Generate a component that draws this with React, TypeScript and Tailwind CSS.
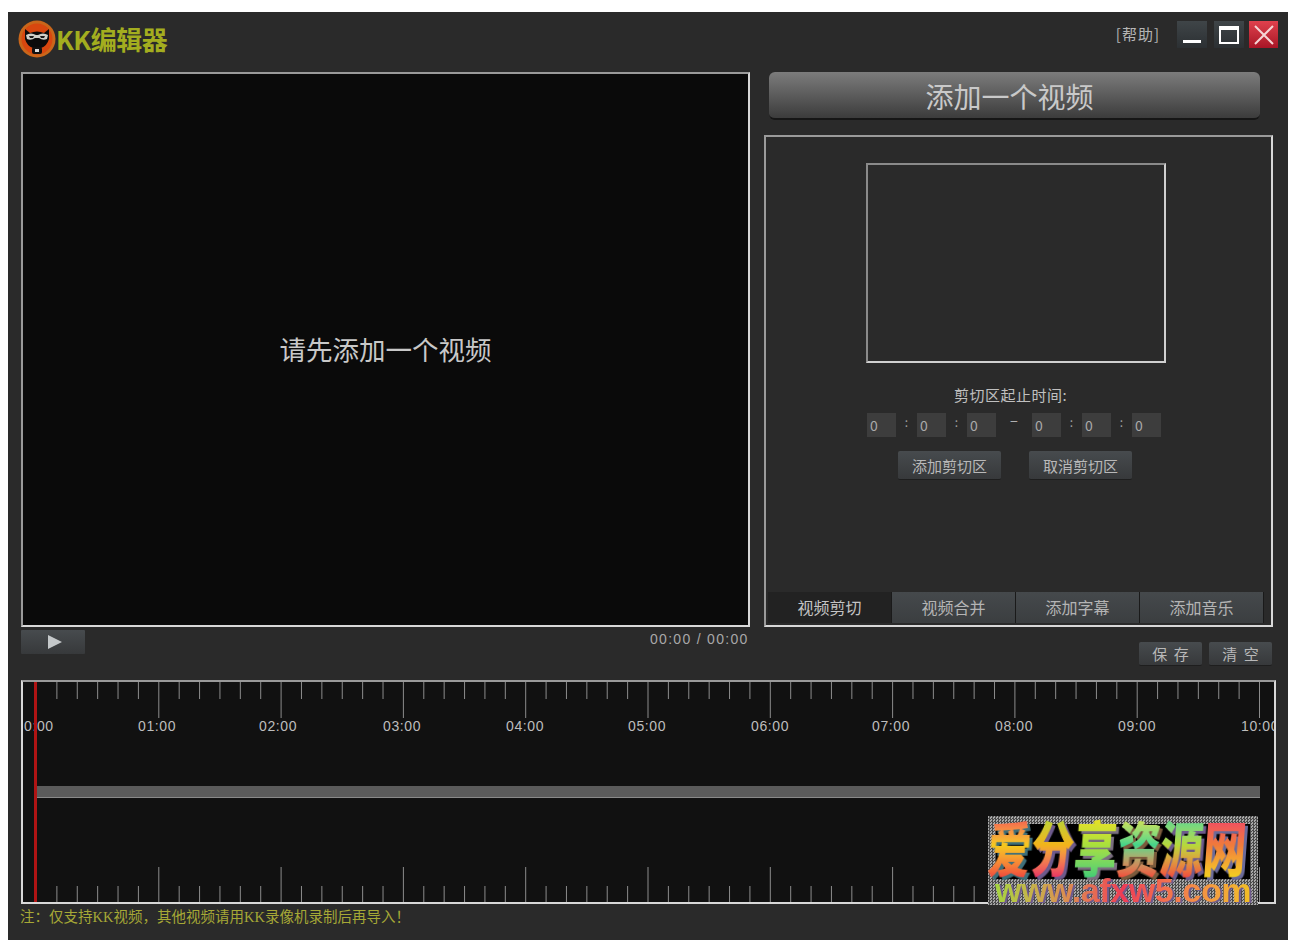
import React from 'react';

const minutes = ['0:00', '01:00', '02:00', '03:00', '04:00', '05:00', '06:00', '07:00', '08:00', '09:00', '10:00'];
const labelX = [1, 115, 236, 360, 483, 605, 728, 849, 972, 1095, 1218];

const ticks = Array.from({ length: 61 }, (_, i) => i).map((i) => ({
  x: 13.5 + (i * 1223) / 60,
  major: i % 6 === 0,
  first: i === 0
}));

const Logo = () => (
  <svg width="38" height="38" viewBox="0 0 38 38" className="shrink-0">
    <circle cx="19" cy="19" r="18.5" fill="#c9661a" />
    <circle cx="19" cy="19" r="15.5" fill="#d8470f" />
    <path d="M7 9 L12 13 Q19 10 26 13 L31 9 L31 19 Q29 26 23 28 L15 28 Q9 26 7 19 Z" fill="#0b0b0b" />
    <path d="M8 15 Q13 12 18 15 L20 15 Q25 12 30 15 L29 19 Q25 21 21 18 L17 18 Q13 21 9 19 Z" fill="#cfcfc8" />
    <path d="M11 16 L16 16 L15 18 L12 18 Z M22 16 L27 16 L26 18 L23 18 Z" fill="#1a1a1a" />
    <rect x="14" y="27" width="10" height="7" rx="2" fill="#111" />
    <rect x="17" y="29" width="4" height="3" fill="#ddd" />
  </svg>
);

const WinButton = ({ children, red }: { children: React.ReactNode; red?: boolean }) => (
  <div
    className={`h-[27px] flex items-center justify-center ${
      red ? 'w-[29px] bg-gradient-to-b from-[#e0414d] to-[#a81426]' : 'w-[30px] bg-gradient-to-b from-[#3f4548] to-[#2c3033]'
    }`}
  >
    {children}
  </div>
);

const SmallButton = ({ label, width }: { label: string; width: string }) => (
  <div
    className={`${width} h-full flex items-center justify-center whitespace-pre rounded-[2px] bg-gradient-to-b from-[#474b4e] to-[#37393b] border-b border-[#1e1e1e] text-[#b9b9b9] text-[15px] leading-none`}
  >
    {label}
  </div>
);

const TimeBox = () => (
  <div className="w-[29px] h-[24px] bg-[#3d3d3d] text-[#aaaaaa] text-[14px] leading-[24px] pl-[3px]">0</div>
);

const Colon = () => <div className="w-[21px] text-center text-[#a0a0a0] text-[12px] leading-[18px]">:</div>;

const Timeline = () => (
  <svg width="1251" height="220" viewBox="0 0 1251 220" className="block">
    {ticks.map((t) =>
      t.first ? null : (
        <g key={t.x} stroke="#8c8c8c" strokeWidth="1">
          <line x1={t.x} x2={t.x} y1="0" y2={t.major ? 36 : 17} />
          <line x1={t.x} x2={t.x} y1={t.major ? 185 : 204} y2="221" />
        </g>
      )
    )}
    {minutes.map((m, i) => (
      <text key={m} x={labelX[i]} y="49" fill="#bdbdbd" fontSize="14" letterSpacing="0.6" fontFamily="Liberation Sans, sans-serif">
        {m}
      </text>
    ))}
    <rect x="13" y="104" width="1224" height="12" fill="#5b5b5b" />
    <rect x="13" y="115" width="1224" height="1" fill="#8a8a8a" />
    <rect x="11" y="0" width="3" height="220" fill="#b01414" />
  </svg>
);

const Watermark = () => (
  <div className="absolute left-[980px] top-[804px] w-[270px] h-[89px] overflow-hidden bg-[repeating-conic-gradient(#4a4a4a_0_25%,#a8a8a8_0_50%)] bg-[length:3px_3px] font-['Noto_Sans_CJK_SC',sans-serif]">
    <div className="absolute left-[8px] right-[8px] top-[8px] bottom-[26px] bg-black" />
    <div className="absolute left-0 top-[-3px] flex pl-[3px] text-[43px] leading-[46px] font-black skew-x-[-6deg] scale-y-[1.4] origin-top">
      <span className="bg-gradient-to-b from-[#ef3b52] via-[#f4c91c] to-[#f0473c] bg-clip-text text-transparent drop-shadow-[3px_2px_0_#3e6f7a]">爱</span>
      <span className="bg-gradient-to-b from-[#a5d93a] via-[#f2b31a] to-[#ea2f62] bg-clip-text text-transparent drop-shadow-[3px_2px_0_#6d5a8c]">分</span>
      <span className="bg-gradient-to-b from-[#f5df1c] via-[#a8e03c] to-[#3fce74] bg-clip-text text-transparent drop-shadow-[3px_2px_0_#7b6f80]">享</span>
      <span className="bg-gradient-to-b from-[#e7e33a] via-[#3fd58a] to-[#f14a3c] bg-clip-text text-transparent drop-shadow-[3px_2px_0_#7b5a3c]">资</span>
      <span className="bg-gradient-to-b from-[#35d79a] via-[#b6d83a] to-[#f0483e] bg-clip-text text-transparent drop-shadow-[3px_2px_0_#6d5a8c]">源</span>
      <span className="bg-gradient-to-b from-[#ee3a68] via-[#f07a3a] to-[#f3cf1d] bg-clip-text text-transparent drop-shadow-[3px_2px_0_#6a6a9a]">网</span>
    </div>
    <div className="absolute left-0 right-0 bottom-0 text-center text-[34px] leading-[30px] font-bold tracking-[-0.4px] bg-gradient-to-r from-[#9bdc3c] via-[#ee3a55] to-[#f0c41a] bg-clip-text text-transparent drop-shadow-[2px_1px_0_#6d5a8c] font-['Liberation_Sans',sans-serif]">
      www.afxw5.com
    </div>
  </div>
);

export default function App() {
  return (
    <div className="min-h-screen bg-white pt-3 pl-2 font-['Noto_Sans_CJK_SC',sans-serif]">
      <div className="relative w-[1280px] h-[928px] bg-[#2a2a2a] flex flex-col">
        {/* title bar */}
        <div className="h-[60px] flex items-start pl-[10px] pr-[10px]">
          <div className="flex items-center mt-[8px]">
            <Logo />
            <span className="text-[26px] leading-[38px] font-bold text-[#a3ad1f] tracking-[-0.5px]">KK编辑器</span>
          </div>
          <div className="ml-auto flex items-center mt-[9px]">
            <span className="text-[#b5b5b5] text-[15px] tracking-[1px] mr-[17px] leading-none mb-[2px]">[帮助]</span>
            <WinButton>
              <div className="w-[18px] h-[3px] bg-white mt-[14px]" />
            </WinButton>
            <div className="w-[7px]" />
            <WinButton>
              <div className="w-[20px] h-[18px] border-[2px] border-t-[4px] border-white" />
            </WinButton>
            <div className="w-[5px]" />
            <WinButton red>
              <svg width="20" height="20" viewBox="0 0 20 20" stroke="#f5d5d5" strokeWidth="2">
                <path d="M1 1 L19 19 M19 1 L1 19" />
              </svg>
            </WinButton>
          </div>
        </div>

        {/* main area */}
        <div className="flex h-[555px] pl-[13px]">
          <div className="w-[729px] border-2 border-[#d8d8d8] border-t-[#9a9a9a] border-l-[#9a9a9a] bg-[#0a0a0a] flex items-center justify-center">
            <span className="text-[#c8c8c8] text-[26.5px] leading-none">请先添加一个视频</span>
          </div>
          <div className="ml-[14px] w-[509px] flex flex-col">
            <div className="ml-[5px] w-[491px] h-[48px] pr-[10px] pt-[2px] rounded-[6px] bg-gradient-to-b from-[#7c7c7c] via-[#5c5c5c] to-[#3c3c3c] border-b-2 border-[#161616] flex items-center justify-center text-[#c9c9c9] text-[28px] leading-none">
              添加一个视频
            </div>
            <div className="mt-[15px] flex-1 border-2 border-[#d8d8d8] border-t-[#9a9a9a] border-l-[#9a9a9a] flex flex-col">
              <div className="ml-[100px] mt-[26px] w-[300px] h-[200px] border-2 border-[#d0d0d0] border-t-[#8a8a8a] border-l-[#8a8a8a]" />
              <div className="mt-[20px] ml-[188px] text-[#c0c0c0] text-[15px] tracking-[0.5px] leading-[24px]">剪切区起止时间:</div>
              <div className="mt-[6px] ml-[101px] flex items-start">
                <TimeBox />
                <Colon />
                <TimeBox />
                <Colon />
                <TimeBox />
                <div className="w-[36px] text-center text-[#b0b0b0] text-[14px] leading-[16px]">−</div>
                <TimeBox />
                <Colon />
                <TimeBox />
                <Colon />
                <TimeBox />
              </div>
              <div className="mt-[14px] ml-[132px] h-[29px] flex gap-[28px]">
                <SmallButton label="添加剪切区" width="w-[103px]" />
                <SmallButton label="取消剪切区" width="w-[103px]" />
              </div>
              <div className="mt-auto mb-[2px] ml-[2px] w-[496px] h-[31px] pb-0 flex bg-[#1a1a1a] text-[16px] leading-[28px] text-[#b4b4b4]">
                <div className="w-[123px] flex items-center justify-center pb-[2px] bg-[#222222] text-[#c4c4c4]">视频剪切</div>
                <div className="ml-[1px] w-[123px] flex items-center justify-center pb-[2px] bg-gradient-to-b from-[#45494c] to-[#3b3e40]">视频合并</div>
                <div className="ml-[1px] w-[123px] flex items-center justify-center pb-[2px] bg-gradient-to-b from-[#45494c] to-[#3b3e40]">添加字幕</div>
                <div className="ml-[1px] w-[123px] flex items-center justify-center pb-[2px] bg-gradient-to-b from-[#45494c] to-[#3b3e40]">添加音乐</div>
              </div>
            </div>
          </div>
        </div>

        {/* controls under the player */}
        <div className="h-[53px] flex pl-[13px]">
          <div className="mt-[3px] w-[64px] h-[24px] pl-[4px] rounded-[1px] bg-gradient-to-b from-[#474b4e] to-[#37393b] flex items-center justify-center">
            <svg width="14" height="14" viewBox="0 0 14 14">
              <path d="M0 0 L14 7 L0 14 Z" fill="#c4c8ca" />
            </svg>
          </div>
          <div className="ml-[565px] mt-[3px] w-[100px] text-[#a8a8a8] text-[14px] leading-[18px] tracking-[1.3px] whitespace-pre font-['Liberation_Sans',sans-serif]">
            00:00 / 00:00
          </div>
          <div className="ml-[389px] mt-[15px] h-[24px] flex gap-[7px]">
            <SmallButton label="保  存" width="w-[63px]" />
            <SmallButton label="清  空" width="w-[63px]" />
          </div>
        </div>

        {/* timeline */}
        <div className="ml-[13px] w-[1255px] h-[224px] bg-[#111111] border-2 border-[#d8d8d8] border-t-[#9a9a9a] overflow-hidden">
          <Timeline />
        </div>

        <div className="ml-[12px] mt-[3px] text-[#a6a836] text-[14.5px] leading-[20px] font-['Liberation_Serif','Noto_Sans_CJK_SC',serif]">注：仅支持KK视频，其他视频请用KK录像机录制后再导入！</div>

        <Watermark />
      </div>
    </div>
  );
}
